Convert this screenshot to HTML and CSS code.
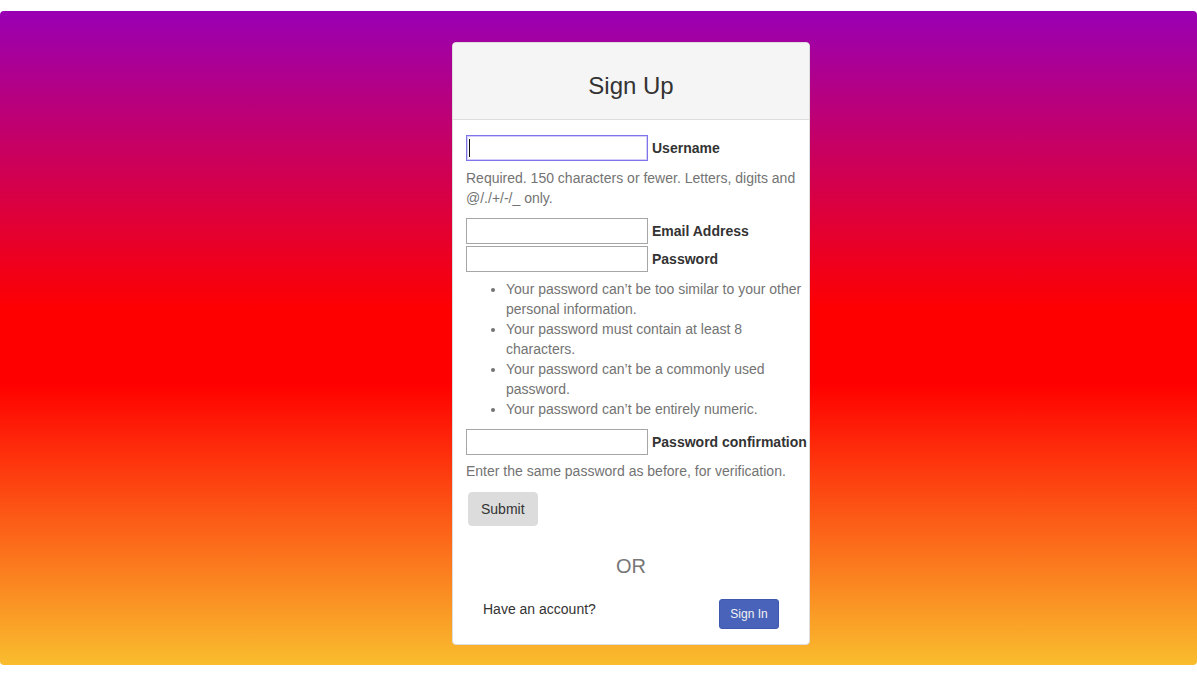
FILE: index.html
```html
<!DOCTYPE html>
<html lang="en">
<head>
<meta charset="utf-8">
<title>Sign Up</title>
<link rel="stylesheet" href="styles.css">
</head>
<body>
<div class="bg">
  <div class="card">
    <div class="card-head">
      <h3 class="title">Sign Up</h3>
    </div>
    <div class="card-body">
      <form class="form">
        <div class="field">
          <span class="input-wrap focused"><input class="input" type="text" id="id_username"></span>
          <label class="label" for="id_username">Username</label>
        </div>
        <p class="help help-first">Required. 150 characters or fewer. Letters, digits and @/./+/-/_ only.</p>

        <div class="field field-email">
          <span class="input-wrap"><input class="input" type="email" id="id_email"></span>
          <label class="label" for="id_email">Email Address</label>
        </div>
        <div class="field field-pass">
          <span class="input-wrap"><input class="input" type="password" id="id_password1"></span>
          <label class="label" for="id_password1">Password</label>
        </div>
        <ul class="rules">
          <li>Your password can’t be too similar to your other personal information.</li>
          <li>Your password must contain at least 8 characters.</li>
          <li>Your password can’t be a commonly used password.</li>
          <li>Your password can’t be entirely numeric.</li>
        </ul>
        <div class="field field-confirm">
          <span class="input-wrap"><input class="input" type="password" id="id_password2"></span>
          <label class="label" for="id_password2">Password confirmation</label>
        </div>
        <p class="help help-confirm">Enter the same password as before, for verification.</p>
        <button class="btn-submit" type="button">Submit</button>
      </form>
      <div class="or">OR</div>
      <div class="account-row">
        <span class="account-text">Have an account?</span>
        <a class="btn-signin" href="#">Sign In</a>
      </div>
    </div>
  </div>
</div>
</body>
</html>
```
FILE: styles.css
```css
html, body {
  margin: 0;
  padding: 0;
  background: #fff;
}

body {
  font-family: "Liberation Sans", Arial, Helvetica, sans-serif;
  font-size: 14px;
  line-height: 20px;
  color: #333;
}

.bg {
  margin-top: 11px;
  height: 654px;
  box-sizing: border-box;
  padding: 31px 0 0 452px;
  border-radius: 4px;
  background: linear-gradient(to bottom, #9900b4 0%, #ff0000 46%, #ff0000 57%, #f9bd2e 100%);
}

.card {
  width: 358px;
  box-sizing: border-box;
  background: #fff;
  border: 1px solid #ddd;
  border-radius: 4px;
}

.card-head {
  background: #f5f5f5;
  border-bottom: 1px solid #ddd;
  border-radius: 3px 3px 0 0;
  padding: 10px 15px;
  text-align: center;
}

.title {
  margin: 20px 0 10px;
  font-size: 24px;
  line-height: 26px;
  font-weight: 500;
  color: #333;
}

.card-body {
  padding: 15px 3px 15px 13px;
}

.field {
  display: flex;
  align-items: center;
  height: 26px;
  white-space: nowrap;
}

.field-email { margin-top: 10px; }
.field-pass { margin-top: 2px; }
.field-confirm { margin-top: 10px; }

.input-wrap {
  position: relative;
  display: block;
  flex: none;
}

.input {
  display: block;
  width: 182px;
  height: 26px;
  box-sizing: border-box;
  margin: 0;
  padding: 2px 3px;
  border: 1px solid #a6a6a6;
  border-radius: 0;
  background: #fff;
  font: inherit;
  outline: none;
}

.focused .input {
  border-color: #7f74ea;
  box-shadow: inset 0 0 0 1px rgba(127, 116, 234, 0.35);
}

.focused::after {
  content: "";
  position: absolute;
  left: 3px;
  top: 4px;
  width: 1px;
  height: 18px;
  background: #111;
}

.label {
  margin-left: 4px;
  font-weight: bold;
  color: #333;
}

.help {
  margin: 0;
  color: #737373;
}

.help-first { margin-top: 7px; }
.help-confirm { margin-top: 6px; }

.rules {
  margin: 7px 0 0;
  padding-left: 40px;
  color: #737373;
}

.btn-submit {
  display: block;
  margin: 11px 0 0 2px;
  height: 34px;
  padding: 6px 12px;
  border: 1px solid #dcdcdc;
  border-radius: 4px;
  background: #dcdcdc;
  color: #333;
  font: inherit;
  line-height: 20px;
}

.or {
  margin: 29px -3px 0 -13px;
  text-align: center;
  font-size: 20px;
  line-height: 22px;
  color: #777;
}

.account-row {
  display: flex;
  justify-content: space-between;
  align-items: flex-start;
  margin-top: 22px;
  padding: 0 27px 0 17px;
}

.account-text {
  color: #333;
  line-height: 20px;
}

.btn-signin {
  display: block;
  box-sizing: border-box;
  width: 60px;
  height: 30px;
  padding: 5px 0;
  text-align: center;
  border: 1px solid #3f58ad;
  border-radius: 3px;
  background: #4863b9;
  color: #f2f2f2;
  font-size: 12px;
  line-height: 18px;
  text-decoration: none;
}
```
